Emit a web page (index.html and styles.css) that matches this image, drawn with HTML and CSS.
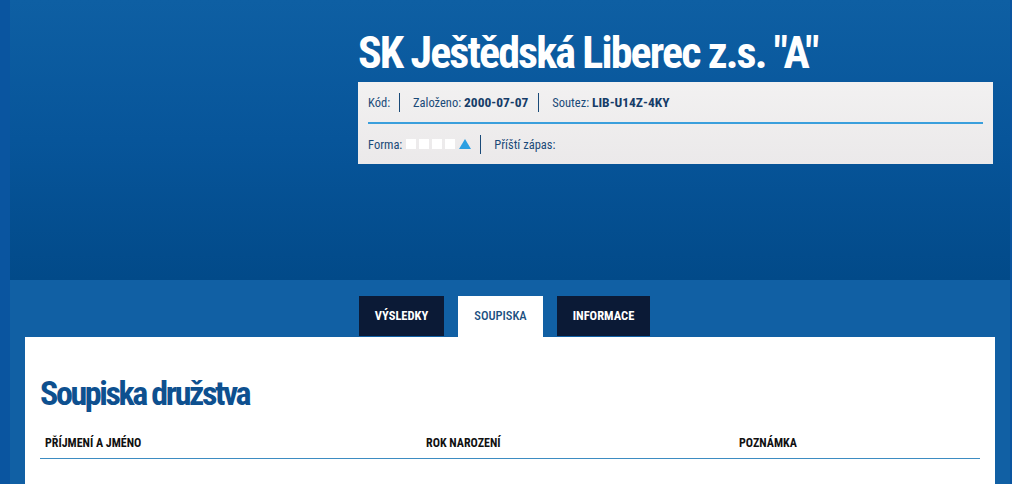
FILE: index.html
```html
<!DOCTYPE html>
<html lang="cs">
<head>
  <meta charset="UTF-8" />
  <title>SK Ještědská Liberec z.s. "A"</title>
  <link rel="stylesheet" href="styles.css">
</head>
<body>
  <div class="page">
    <header class="team-header">
      <h1 class="team-name">SK Ještědská Liberec z.s. "A"</h1>
      <div class="team-box">
        <div class="box-row">
          <span class="item">Kód:</span>
          <span class="item">Založeno:&nbsp;<b>2000-07-07</b></span>
          <span class="item">Soutez:&nbsp;<b>LIB-U14Z-4KY</b></span>
        </div>
        <div class="box-row">
          <span class="item">Forma:<span class="form"><i class="sq"></i><i class="sq"></i><i class="sq"></i><i class="sq"></i><i class="up"></i></span></span>
          <span class="item">Příští zápas:</span>
        </div>
      </div>
    </header>

    <main class="content">
      <nav class="tabs">
        <a href="#" class="tab">Výsledky</a>
        <a href="#" class="tab active">Soupiska</a>
        <a href="#" class="tab">Informace</a>
      </nav>

      <section class="panel">
        <h2>Soupiska družstva</h2>
        <table class="roster">
          <thead>
            <tr>
              <th class="col-name">Příjmení a jméno</th>
              <th class="col-year">Rok narození</th>
              <th>Poznámka</th>
            </tr>
          </thead>
        </table>
      </section>
    </main>
  </div>
</body>
</html>
```

FILE: styles.css
```css
body {
  margin: 0;
  background-color: #0a55a0;
  font-family: "Roboto", "Open Sans", sans-serif;
  font-stretch: 75%;
  color: #1a4a78;
  overflow: hidden;
}

.page {
  margin-left: 10px;
  width: 1000px;
}

.team-header {
  height: 280px;
  box-sizing: border-box;
  padding: 27px 0 0 348px;
  background: linear-gradient(to bottom, #0e5fa3 0%, #07559a 50%, #024a89 100%);
}

.team-name {
  margin: 0 0 3px;
  color: #fff;
  font-size: 44px;
  font-weight: bold;
  line-height: 52px;
  letter-spacing: -1.9px;
}

.team-box {
  width: 635px;
  box-sizing: border-box;
  padding: 0 10px;
  background: linear-gradient(to bottom, #f2f1f1, #ebe9ea);
}

.box-row {
  display: flex;
  align-items: center;
  height: 40px;
  font-size: 12.5px;
}

.box-row:first-child {
  border-bottom: 2px solid #3a9fdc;
}

.item {
  display: flex;
  align-items: center;
  padding: 0 10px 0 13px;
  border-left: 1px solid #1a4a78;
  line-height: 19px;
  white-space: nowrap;
}

.item:first-child {
  padding-left: 0;
  padding-right: 9px;
  border-left: none;
}

.item b {
  color: #163c68;
  font-size: 13.5px;
}

.form {
  display: inline-flex;
  align-items: center;
  gap: 3px;
  margin-left: 4px;
}

.sq {
  width: 10px;
  height: 10px;
  background: #fff;
}

.up {
  width: 0;
  height: 0;
  margin-left: 1px;
  border-left: 6px solid transparent;
  border-right: 6px solid transparent;
  border-bottom: 10px solid #2b9fe2;
}

.content {
  background-color: #1160a4;
  padding: 16px 15px 0;
  min-height: 300px;
}

.tabs {
  display: flex;
  justify-content: center;
  gap: 14px;
  padding-right: 11px;
}

.tab {
  display: block;
  height: 40px;
  line-height: 40px;
  padding: 0 16px;
  text-align: center;
  background: #0b1a36;
  color: #fff;
  font-size: 12.5px;
  font-weight: bold;
  text-transform: uppercase;
  text-decoration: none;
}

.tab.active {
  height: 41px;
  background: #fff;
  color: #1b4f80;
  font-weight: 500;
}

.panel {
  background: #fff;
  padding: 35px 15px 30px;
  min-height: 120px;
}

.panel h2 {
  margin: 0 0 13px;
  color: #0e508f;
  font-size: 34px;
  font-weight: bold;
  line-height: 42px;
  letter-spacing: -2.4px;
}

.roster {
  width: 100%;
  border-collapse: collapse;
}

.roster th {
  padding: 8px 5px 7px;
  line-height: 16px;
  text-align: left;
  font-size: 12px;
  font-weight: bold;
  color: #111;
  text-transform: uppercase;
  border-bottom: 1px solid #3d8cc2;
}

.col-name {
  width: 371px;
}

.col-year {
  width: 303px;
}
```
